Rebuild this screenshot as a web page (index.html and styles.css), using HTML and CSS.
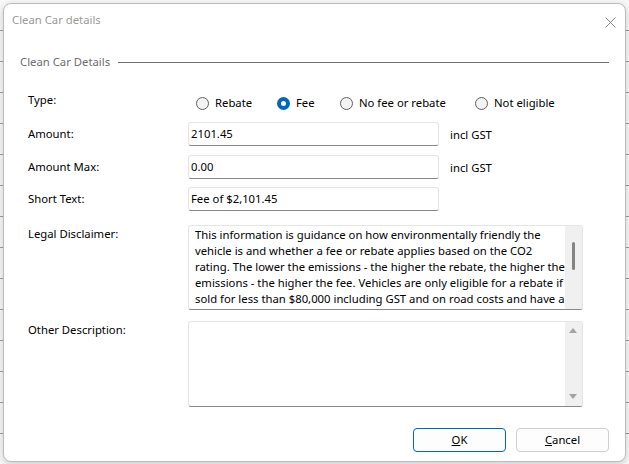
FILE: index.html
```html
<!DOCTYPE html>
<html lang="en">
<head>
<meta charset="utf-8">
<title>Clean Car details</title>
<link rel="stylesheet" href="styles.css">
</head>
<body>
<div class="dialog">
  <div class="titlebar">
    <span class="title">Clean Car details</span>
    <svg class="close" width="11" height="11" viewBox="0 0 11 11"><path d="M0.5 0.5 L10.5 10.5 M10.5 0.5 L0.5 10.5" stroke="#8a8a8a" stroke-width="1" fill="none"/></svg>
  </div>
  <div class="group-head"><span class="group-title">Clean Car Details</span><span class="rule"></span></div>
  <div class="form">
    <div class="row row-type">
      <span class="label label-top">Type:</span>
      <div class="radios">
        <label class="radio"><span class="dot"></span>Rebate</label>
        <label class="radio"><span class="dot on"></span>Fee</label>
        <label class="radio"><span class="dot"></span>No fee or rebate</label>
        <label class="radio"><span class="dot"></span>Not eligible</label>
      </div>
    </div>
    <div class="row row-amount">
      <span class="label">Amount:</span>
      <div class="input">2101.45</div>
      <span class="suffix">incl GST</span>
    </div>
    <div class="row row-max">
      <span class="label">Amount Max:</span>
      <div class="input">0.00</div>
      <span class="suffix">incl GST</span>
    </div>
    <div class="row row-short">
      <span class="label">Short Text:</span>
      <div class="input">Fee of $2,101.45</div>
    </div>
    <div class="row row-legal">
      <span class="label label-area">Legal Disclaimer:</span>
      <div class="area area-legal">
        <div class="area-text">
          <span class="line">This information is guidance on how environmentally friendly the</span>
          <span class="line">vehicle is and whether a fee or rebate applies based on the CO2</span>
          <span class="line">rating. The lower the emissions - the higher the rebate, the higher the</span>
          <span class="line">emissions - the higher the fee. Vehicles are only eligible for a rebate if</span>
          <span class="line">sold for less than $80,000 including GST and on road costs and have a</span>
          <span class="line">3 star safety rating or above. The fee and rebate in this section</span>
        </div>
        <div class="scroll"><span class="thumb"></span></div>
      </div>
    </div>
    <div class="row row-other">
      <span class="label label-area">Other Description:</span>
      <div class="area area-other">
        <div class="area-text"></div>
        <div class="scroll scroll-arrows"><span class="arrow-up"></span><span class="arrow-down"></span></div>
      </div>
    </div>
  </div>
  <div class="buttons">
    <button class="btn btn-default"><u>O</u>K</button>
    <button class="btn"><u>C</u>ancel</button>
  </div>
</div>
</body>
</html>
```
FILE: styles.css
```css
* { box-sizing: border-box; }
html, body { margin: 0; height: 100%; }
body {
  width: 629px;
  height: 464px;
  overflow: hidden;
  padding: 3px 0 0 3px;
  font-family: "Segoe UI", "Noto Sans", "Open Sans", sans-serif;
  font-size: 11.3px;
  line-height: 16px;
  color: #000;
  background-color: #f7f7f7;
  background-image: repeating-linear-gradient(to bottom, transparent 0 30px, #9c9c9c 30px 31px);
}
.dialog {
  width: 623px;
  height: 459px;
  background: #fff;
  border: 1px solid #bdbdbd;
  border-radius: 8px;
  box-shadow: 0 2px 6px rgba(0,0,0,0.18);
  display: flex;
  flex-direction: column;
}
.titlebar {
  height: 32px;
  display: flex;
  align-items: flex-start;
  justify-content: space-between;
  padding: 8px 9px 0 8px;
}
.title { color: #9a9a9a; }
.close { margin-top: 5px; }
.group-head {
  display: flex;
  align-items: center;
  padding: 18px 16px 0 16px;
  color: #6e6e6e;
}
.group-title { white-space: nowrap; }
.rule {
  flex: 1;
  height: 1px;
  background: #6f6f6f;
  margin-left: 8px;
}
.form {
  display: flex;
  flex-direction: column;
  padding: 0 0 0 24px;
}
.row { display: flex; align-items: center; }
.label { width: 160px; flex: none; white-space: nowrap; }
.row-type { height: 20px; margin-top: 23px; }
.label-top { align-self: flex-start; margin-top: -1px; }
.radios {
  display: grid;
  grid-template-columns: 81px 63px 135px auto;
  padding-left: 8px;
}
.radio {
  display: flex;
  align-items: center;
  gap: 6px;
  white-space: nowrap;
}
.dot {
  width: 13px;
  height: 13px;
  border-radius: 50%;
  border: 1px solid #5f5f5f;
  background: #f3f3f3;
  flex: none;
}
.dot.on {
  border: 4px solid #0067c0;
  background: #fff;
}
.input {
  width: 251px;
  height: 24px;
  border: 1px solid #e5e5e5;
  border-bottom-color: #8a8a8a;
  border-radius: 3px;
  padding: 3px 0 0 2px;
  white-space: nowrap;
}
.suffix { margin-left: 11px; padding-top: 2px; }
.row-amount { margin-top: 9px; }
.row-max { margin-top: 9px; }
.row-short { margin-top: 8px; }
.row-legal { margin-top: 14px; align-items: flex-start; }
.row-other { margin-top: 11px; align-items: flex-start; }
.label-area { margin-top: 1px; }
.area {
  width: 395px;
  border: 1px solid #e5e5e5;
  border-bottom-color: #8a8a8a;
  border-radius: 3px;
  display: flex;
  overflow: hidden;
}
.area-legal { height: 85px; }
.area-other { height: 86px; }
.area-text {
  flex: 1;
  padding: 1px 0 0 6px;
  overflow: hidden;
}
.line { display: block; white-space: nowrap; }
.scroll {
  width: 17px;
  flex: none;
  background: #f0f0f0;
  position: relative;
}
.thumb {
  position: absolute;
  left: 7px;
  top: 16px;
  width: 3px;
  height: 28px;
  background: #858585;
  border-radius: 2px;
}
.arrow-up, .arrow-down {
  position: absolute;
  left: 4px;
  width: 0;
  height: 0;
  border-left: 4px solid transparent;
  border-right: 4px solid transparent;
}
.arrow-up { top: 6px; border-bottom: 5px solid #a3a3a3; }
.arrow-down { bottom: 7px; border-top: 5px solid #a3a3a3; }
.buttons {
  display: flex;
  justify-content: flex-end;
  gap: 10px;
  padding: 21px 16px 0 0;
}
.btn {
  width: 93px;
  height: 24px;
  font: inherit;
  color: #000;
  background: #fdfdfd;
  border: 1px solid #d0d0d0;
  border-radius: 4px;
  padding: 0;
}
.btn-default { border-color: #0067c0; }
```
